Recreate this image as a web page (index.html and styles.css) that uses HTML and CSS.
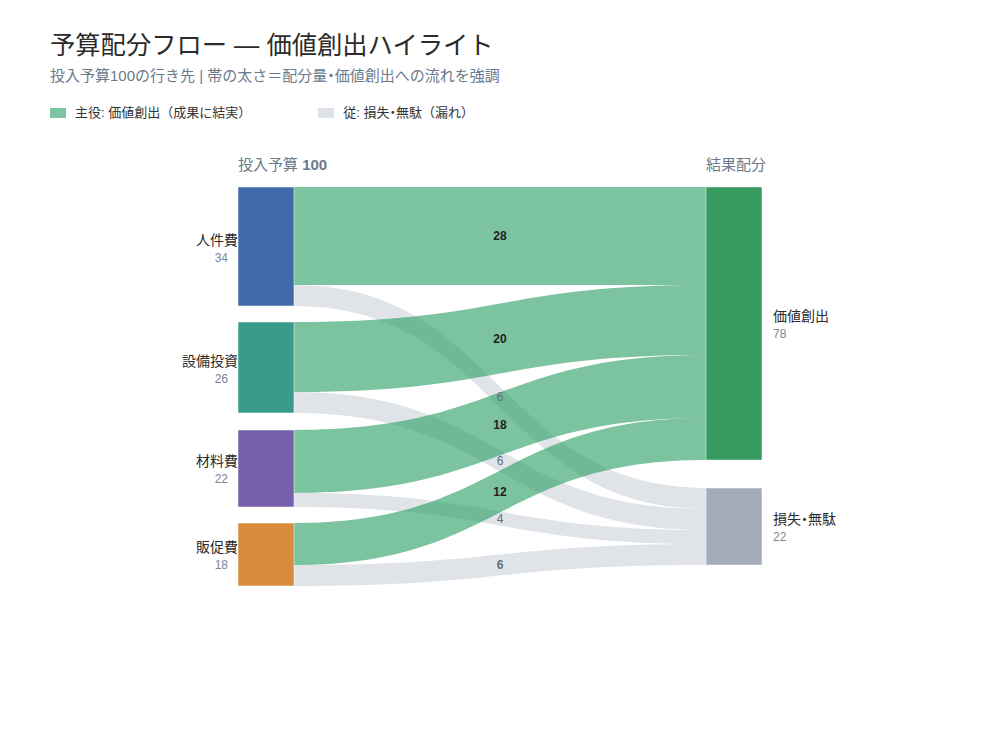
FILE: index.html
```html
<!DOCTYPE html>
<html lang="ja">
<head>
<meta charset="utf-8">
<title>予算配分フロー</title>
<link rel="stylesheet" href="styles.css">
</head>
<body>
<div class="page">
  <header class="head">
    <h1 class="title">予算配分フロー — 価値創出ハイライト</h1>
    <p class="subtitle">投入予算100の行き先 | 帯の太さ＝配分量<span class="dot">・</span>価値創出への流れを強調</p>
    <div class="legend">
      <div class="legend-item"><span class="swatch swatch-main"></span>主役: 価値創出（成果に結実）</div>
      <div class="legend-item"><span class="swatch swatch-sub"></span>従: 損失<span class="dot">・</span>無駄（漏れ）</div>
    </div>
  </header>
  <svg class="chart" width="1000" height="470" viewBox="0 140 1000 470" xmlns="http://www.w3.org/2000/svg">
    <text class="col-head" x="238" y="170">投入予算 <tspan class="col-bold">100</tspan></text>
    <text class="col-head" x="706" y="170">結果配分</text>

    <g class="links-sub">
      <path d="M294,285 C500,285 500,488 706,488 L706,509 C500,509 500,306 294,306 Z"/>
      <path d="M294,392 C500,392 500,509 706,509 L706,530 C500,530 500,413 294,413 Z"/>
      <path d="M294,493 C500,493 500,530 706,530 L706,544 C500,544 500,507 294,507 Z"/>
      <path d="M294,565 C500,565 500,544 706,544 L706,565 C500,565 500,586 294,586 Z"/>
    </g>
    <g class="links-main">
      <path d="M294,187 C500,187 500,187 706,187 L706,285 C500,285 500,285 294,285 Z"/>
      <path d="M294,322 C500,322 500,285 706,285 L706,355 C500,355 500,392 294,392 Z"/>
      <path d="M294,430 C500,430 500,355 706,355 L706,418 C500,418 500,493 294,493 Z"/>
      <path d="M294,523 C500,523 500,418 706,418 L706,460 C500,460 500,565 294,565 Z"/>
    </g>

    <rect class="node n-jin" x="238" y="187" width="56" height="119"/>
    <rect class="node n-set" x="238" y="322" width="56" height="91"/>
    <rect class="node n-zai" x="238" y="430" width="56" height="77"/>
    <rect class="node n-han" x="238" y="523" width="56" height="63"/>
    <rect class="node n-val" x="706" y="187" width="56" height="273"/>
    <rect class="node n-loss" x="706" y="488" width="56" height="77"/>

    <text class="node-label end" x="238" y="245">人件費</text>
    <text class="node-num end" x="228" y="262">34</text>
    <text class="node-label end" x="238" y="366">設備投資</text>
    <text class="node-num end" x="228" y="383">26</text>
    <text class="node-label end" x="238" y="466">材料費</text>
    <text class="node-num end" x="228" y="483">22</text>
    <text class="node-label end" x="238" y="552">販促費</text>
    <text class="node-num end" x="228" y="569">18</text>

    <text class="node-label" x="773" y="321">価値創出</text>
    <text class="node-num" x="773" y="338">78</text>
    <text class="node-label" x="773" y="524">損失<tspan class="dot">・</tspan>無駄</text>
    <text class="node-num" x="773" y="541">22</text>

    <text class="val-main" x="500" y="240">28</text>
    <text class="val-main" x="500" y="343">20</text>
    <text class="val-sub" x="500" y="401">6</text>
    <text class="val-main" x="500" y="429">18</text>
    <text class="val-sub" x="500" y="465">6</text>
    <text class="val-main" x="500" y="496">12</text>
    <text class="val-sub" x="500" y="523">4</text>
    <text class="val-sub strong" x="500" y="569">6</text>
  </svg>
</div>
</body>
</html>
```
FILE: styles.css
```css
html, body {
  margin: 0;
  padding: 0;
  background: #ffffff;
}
body {
  font-family: "Liberation Sans", "Noto Sans CJK JP", sans-serif;
  color: #2b2b2b;
}
.page {
  width: 1000px;
  height: 750px;
  overflow: hidden;
}
.head {
  padding: 30px 50px 0 50px;
  height: 110px;
}
.title {
  margin: 0;
  font-size: 25.3px;
  line-height: 30px;
  font-weight: 400;
  color: #2b2b2b;
}
.subtitle {
  margin: 6px 0 0 0;
  font-size: 15px;
  line-height: 20px;
  color: #6b7a8c;
}
.dot {
  font-feature-settings: "palt";
}
.legend {
  display: flex;
  gap: 67px;
  margin-top: 17px;
  font-size: 13px;
  line-height: 20px;
  color: #333333;
}
.legend-item {
  display: flex;
  align-items: center;
}
.swatch {
  width: 16px;
  height: 10px;
  margin-right: 9px;
  display: inline-block;
}
.swatch-main { background: #7cc4a3; }
.swatch-sub { background: #dfe2e6; }
.chart {
  display: block;
}
.col-head {
  font-size: 15px;
  fill: #6b7a8c;
}
.col-bold {
  font-weight: 700;
}
.links-main path {
  fill: rgba(44, 158, 100, 0.62);
}
.links-sub path {
  fill: rgba(160, 170, 182, 0.32);
}
.node {
  stroke: #ffffff;
  stroke-width: 0.5;
}
.n-jin { fill: #416aab; }
.n-set { fill: #3a9a8c; }
.n-zai { fill: #7460ab; }
.n-han { fill: #d68c3a; }
.n-val { fill: #369a5e; }
.n-loss { fill: #a3acb8; }
.node-label {
  font-size: 14px;
  fill: #2b2b2b;
}
.node-num {
  font-size: 12px;
  fill: #7a8694;
}
.end { text-anchor: end; }
.val-main {
  font-size: 12px;
  font-weight: 700;
  fill: #1f1f1f;
  text-anchor: middle;
}
.val-sub {
  font-size: 12px;
  fill: #5f6f80;
  text-anchor: middle;
}
.val-sub.strong {
  font-weight: 700;
}
```
